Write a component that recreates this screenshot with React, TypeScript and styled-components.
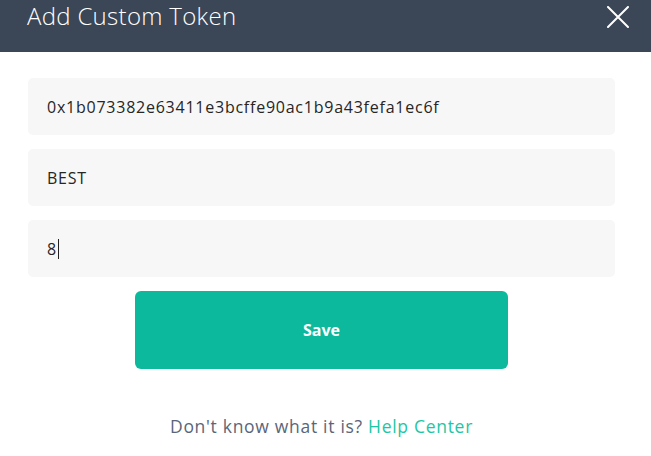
import styled, { createGlobalStyle } from 'styled-components'

const GlobalStyle = createGlobalStyle`
  html, body {
    margin: 0;
    padding: 0;
    background: #ffffff;
  }
  body {
    font-family: 'Open Sans', sans-serif;
  }
`

const Dialog = styled.div`
  width: 651px;
  height: 456px;
  display: flex;
  flex-direction: column;
  background: #fff;
  overflow: hidden;
`

const Header = styled.header`
  height: 52px;
  flex-shrink: 0;
  background: #3b4656;
  display: flex;
  align-items: flex-start;
  justify-content: space-between;
  padding: 0 22px 0 27px;
  box-sizing: border-box;
`

const Title = styled.h2`
  margin: 0;
  margin-top: 1px;
  font-weight: 300;
  font-size: 24px;
  line-height: 30px;
  color: #ffffff;
  letter-spacing: 0.3px;
`

const CloseButton = styled.button`
  margin-top: 6px;
  width: 22px;
  height: 22px;
  padding: 0;
  border: 0;
  background: transparent;
  cursor: pointer;
  display: flex;
`

const Body = styled.div`
  display: flex;
  flex-direction: column;
  padding: 26px 36px 0 28px;
`

const Fields = styled.div`
  display: flex;
  flex-direction: column;
  gap: 14px;
`

const Field = styled.div`
  height: 57px;
  border-radius: 5px;
  background: #f7f7f7;
  display: flex;
  align-items: center;
  padding: 0 19px;
  font-size: 16px;
  color: #262626;
  letter-spacing: 0.76px;
`

const Caret = styled.span`
  display: inline-block;
  width: 1px;
  height: 20px;
  background: #222;
  margin-left: 1px;
`

const SaveButton = styled.button`
  align-self: center;
  margin-top: 14px;
  width: 373px;
  height: 78px;
  border: 0;
  border-radius: 6px;
  background: #0cb99c;
  color: #fff;
  font-family: 'Open Sans', sans-serif;
  font-weight: 700;
  font-size: 16px;
  cursor: pointer;
`

const Footer = styled.p`
  margin: 45px 0 0;
  text-align: center;
  font-size: 17.5px;
  letter-spacing: 0.7px;
  color: #5b6579;
`

const HelpLink = styled.a`
  color: #1ec6a4;
  text-decoration: none;
`

export default function App() {
  return (
    <>
      <GlobalStyle />
      <Dialog>
        <Header>
          <Title>Add Custom Token</Title>
          <CloseButton aria-label="Close">
            <svg width="22" height="22" viewBox="0 0 22 22">
              <path d="M1 1L21 21M21 1L1 21" stroke="#fff" strokeWidth="2" strokeLinecap="round" />
            </svg>
          </CloseButton>
        </Header>
        <Body>
          <Fields>
            <Field>0x1b073382e63411e3bcffe90ac1b9a43fefa1ec6f</Field>
            <Field>BEST</Field>
            <Field>
              8<Caret />
            </Field>
          </Fields>
          <SaveButton>Save</SaveButton>
          <Footer>
            Don't know what it is? <HelpLink href="#">Help Center</HelpLink>
          </Footer>
        </Body>
      </Dialog>
    </>
  )
}
